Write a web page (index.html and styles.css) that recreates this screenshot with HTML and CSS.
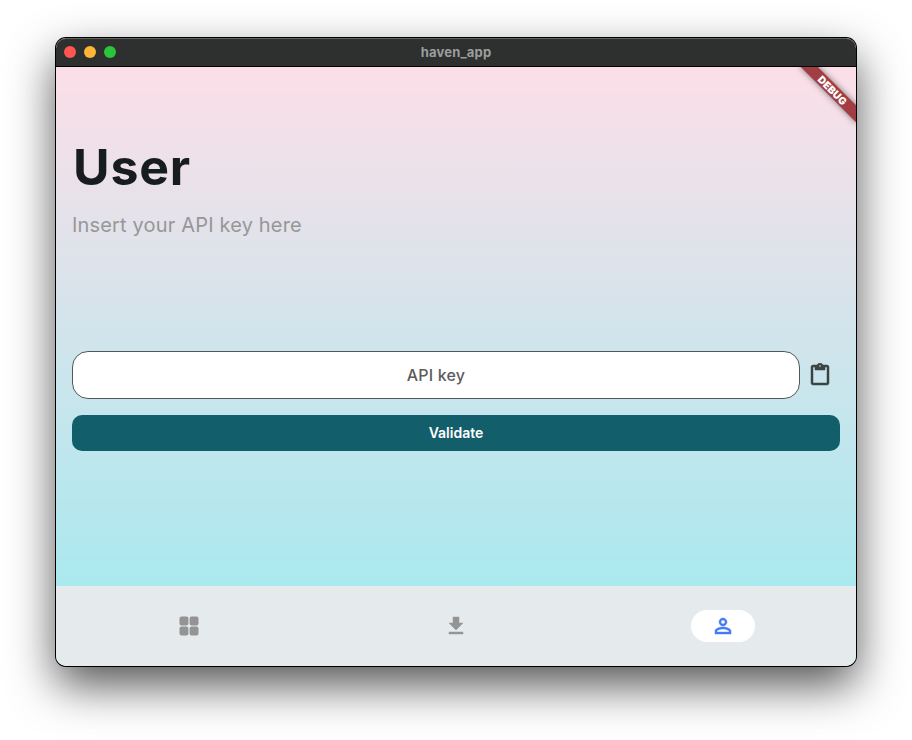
FILE: index.html
```html
<!DOCTYPE html>
<html lang="en">
<head>
<meta charset="utf-8">
<title>haven_app</title>
<link rel="stylesheet" href="styles.css">
</head>
<body>
<div class="window">
  <header class="titlebar">
    <div class="lights"><span class="light close"></span><span class="light minimize"></span><span class="light expand"></span></div>
    <div class="title"><span>haven_app</span></div>
  </header>
  <main class="page">
    <div class="debug"><span>DEBUG</span></div>
    <h1><span>User</span></h1>
    <p class="subtitle"><span>Insert your API key here</span></p>
    <div class="key-row">
      <div class="field"><span>API key</span></div>
      <button class="paste" aria-label="Paste">
        <svg class="bold" viewBox="0 0 24 24" width="24" height="24"><path d="M19 2h-4.180C14.400.840 13.300 0 12 0S9.600.840 9.180 2H5c-1.100 0-2 .9-2 2v16c0 1.100.9 2 2 2h14c1.100 0 2-.9 2-2V4c0-1.100-.9-2-2-2zm-7 0c.550 0 1 .450 1 1s-.450 1-1 1-1-.450-1-1 .450-1 1-1zm7 18H5V4h2v3h10V4h2v16z"/></svg>
      </button>
    </div>
    <button class="validate"><span>Validate</span></button>
  </main>
  <nav class="nav">
    <div class="tab"><svg viewBox="0 0 24 24" width="24" height="24"><rect x="2.500" y="2.500" width="8.900" height="8.900" rx="2"/><rect x="12.600" y="2.500" width="8.900" height="8.900" rx="2"/><rect x="2.500" y="12.600" width="8.900" height="8.900" rx="2"/><rect x="12.600" y="12.600" width="8.900" height="8.900" rx="2"/></svg></div>
    <div class="tab"><svg class="bold" viewBox="0 0 24 24" width="24" height="24"><path d="M19 9h-4V3H9v6H5l7 7 7-7zM5 18v2h14v-2H5z"/></svg></div>
    <div class="tab"><div class="pill"><svg class="bold" viewBox="0 0 24 24" width="24" height="24"><path d="M12 5.900a2.100 2.100 0 1 1 0 4.200 2.100 2.100 0 0 1 0-4.200m0 9c2.970 0 6.100 1.460 6.100 2.100v1.100H5.900V17c0-.640 3.130-2.100 6.100-2.100M12 4C9.790 4 8 5.790 8 8s1.790 4 4 4 4-1.790 4-4-1.790-4-4-4zm0 9c-2.670 0-8 1.340-8 4v3h16v-3c0-2.660-5.330-4-8-4z"/></svg></div></div>
  </nav>
</div>
</body>
</html>
```
FILE: styles.css
```css
* { box-sizing: border-box; }
body {
  margin: 0;
  padding: 38px 56px;
  background: #fff;
  height: 740px;
  overflow: hidden;
  font-family: Inter, sans-serif;
}
button { border: 0; padding: 0; background: none; font-family: inherit; }
svg { display: block; fill: currentColor; }
.bold { stroke: currentColor; stroke-width: .5px; }
.window {
  width: 800px;
  height: 628px;
  display: flex;
  flex-direction: column;
  border-radius: 10px;
  overflow: hidden;
  box-shadow: 0 0 0 1px #000, 0 19px 46px rgba(0, 0, 0, .68);
}
.titlebar {
  height: 29px;
  flex: none;
  display: grid;
  grid-template-columns: 1fr auto 1fr;
  align-items: center;
  padding: 0 8px;
  background: #2d302f;
  border-bottom: 1px solid #000;
  border-radius: 10px 10px 0 0;
  box-shadow: inset 0 1px 0 #606362;
}
.lights { display: flex; gap: 8px; }
.light { width: 12px; height: 12px; border-radius: 50%; }
.close { background: #ff5651; }
.minimize { background: #fdb438; }
.expand { background: #2bc53c; }
.title {
  padding-bottom: 1px;
  color: #9c9e9d;
  font-size: 13px;
  font-weight: 700;
  line-height: 16px;
  letter-spacing: .2px;
}
.page {
  position: relative;
  overflow: hidden;
  height: 519px;
  flex: none;
  display: flex;
  flex-direction: column;
  padding: 68px 16px 0;
  background: linear-gradient(#fcdfe8, #aae9ef);
}
.debug {
  position: absolute;
  right: -40px;
  top: 27px;
  width: 80px;
  height: 12px;
  transform: rotate(45deg);
  transform-origin: 50% -27px;
  background: #a13d43;
  box-shadow: 0 0 6px rgba(0, 0, 0, .5);
  color: #fff;
  font-size: 10.2px;
  font-weight: 900;
  line-height: 12px;
  letter-spacing: .15px;
  text-align: center;
}
h1 {
  margin: 0;
  padding-left: 1px;
  height: 64px;
  line-height: 64px;
  font-size: 50px;
  font-weight: 700;
  letter-spacing: .8px;
  color: #171d1e;
}
.subtitle {
  margin: 13px 0 0;
  height: 26px;
  line-height: 26px;
  font-size: 20px;
  letter-spacing: .17px;
  color: #979797;
}
.key-row { display: flex; height: 48px; margin-top: 112.5px; }
.field {
  width: 728px;
  display: flex;
  align-items: center;
  justify-content: center;
  background: #fff;
  border: 1px solid #505855;
  border-radius: 16px;
  color: #5c5c5c;
  font-size: 16px;
  font-weight: 500;
  letter-spacing: .2px;
}
.paste { width: 40px; display: flex; align-items: center; justify-content: center; color: #3b4543; }
.validate {
  height: 36px;
  margin-top: 16px;
  padding-bottom: 1px;
  border-radius: 10px;
  background: #125e6a;
  color: #fff;
  font-size: 14px;
  font-weight: 600;
}
.nav { height: 80px; display: grid; grid-template-columns: repeat(3, 1fr); background: #e5ebed; color: #949494; }
.tab { display: flex; align-items: center; justify-content: center; }
.pill {
  width: 64px;
  height: 32px;
  border-radius: 16px;
  display: flex;
  align-items: center;
  justify-content: center;
  background: #fff;
  color: #447bf3;
}
```
